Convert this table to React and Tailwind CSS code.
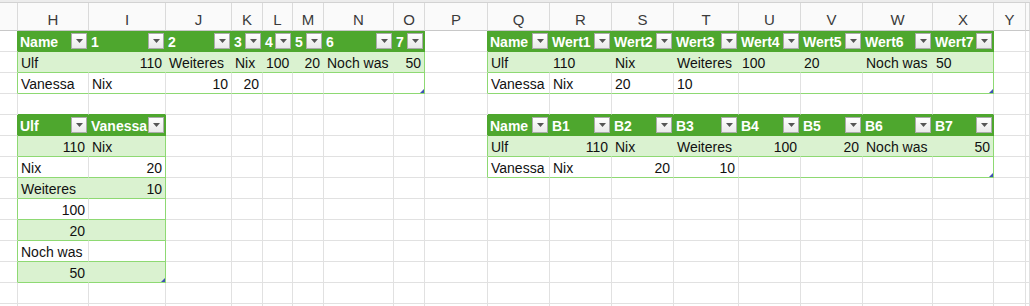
// App.jsx — Excel sheet with four formatted tables

const COLS = [
  ['G', 18], ['H', 71], ['I', 77], ['J', 66], ['K', 31], ['L', 30], ['M', 31], ['N', 70], ['O', 31],
  ['P', 63], ['Q', 62], ['R', 62], ['S', 62], ['T', 65], ['U', 62], ['V', 62], ['W', 70], ['X', 61],
  ['Y', 32], ['Z', 0],
];

const ROWS = 14;

const TABLES = [
  {
    c0: 1, c1: 8, r0: 1,
    head: ['Name', '1', '2', '3', '4', '5', '6', '7'],
    rows: [
      [['Ulf'], ['110', 'r'], ['Weiteres'], ['Nix'], ['100', 'r'], ['20', 'r'], ['Noch was'], ['50', 'r']],
      [['Vanessa'], ['Nix'], ['10', 'r'], ['20', 'r']],
    ],
  },
  {
    c0: 10, c1: 17, r0: 1,
    head: ['Name', 'Wert1', 'Wert2', 'Wert3', 'Wert4', 'Wert5', 'Wert6', 'Wert7'],
    rows: [
      [['Ulf'], ['110'], ['Nix'], ['Weiteres'], ['100'], ['20'], ['Noch was'], ['50']],
      [['Vanessa'], ['Nix'], ['20'], ['10']],
    ],
  },
  {
    c0: 1, c1: 2, r0: 5,
    head: ['Ulf', 'Vanessa'],
    rows: [
      [['110', 'r'], ['Nix']],
      [['Nix'], ['20', 'r']],
      [['Weiteres'], ['10', 'r']],
      [['100', 'r']],
      [['20', 'r']],
      [['Noch was']],
      [['50', 'r']],
    ],
  },
  {
    c0: 10, c1: 17, r0: 5,
    head: ['Name', 'B1', 'B2', 'B3', 'B4', 'B5', 'B6', 'B7'],
    rows: [
      [['Ulf'], ['110', 'r'], ['Nix'], ['Weiteres'], ['100', 'r'], ['20', 'r'], ['Noch was'], ['50', 'r']],
      [['Vanessa'], ['Nix'], ['20', 'r'], ['10', 'r']],
    ],
  },
];

const lastRow = (t) => t.r0 + t.rows.length;

const BG = { head: 'bg-[#4ea72e]', band: 'bg-[#daf2d0]', plain: 'bg-white', none: 'bg-white' };
const RIGHT = {
  head: 'border-r-[#4ea72e]',
  band: 'border-r-[#daf2d0]',
  edge: 'border-r-[#8ed973]',
  grid: 'border-r-[#e1e1e1]',
};
const BOTTOM = {
  head: 'border-b-[#4ea72e]',
  edge: 'border-b-[#8ed973]',
  grid: 'border-b-[#e1e1e1]',
};

function lookup(r, c) {
  for (const t of TABLES) {
    if (c >= t.c0 && c <= t.c1 && r >= t.r0 && r <= lastRow(t)) {
      const i = r - t.r0;
      const j = c - t.c0;
      if (i === 0) return { t, kind: 'head', cell: [t.head[j]], j };
      const kind = (i - 1) % 2 === 0 ? 'band' : 'plain';
      return { t, kind, cell: t.rows[i - 1][j], j };
    }
  }
  return null;
}

function FilterButton() {
  return (
    <span className="ml-auto mr-[1px] mt-[2px] flex h-4 w-4 flex-none items-center justify-center border border-[#ababab] bg-gradient-to-b from-white to-[#e9e9e9]">
      <svg width="7" height="4" viewBox="0 0 7 4">
        <polygon points="0,0 7,0 3.5,4" fill="#555" />
      </svg>
    </span>
  );
}

function Cell({ r, c }) {
  const info = lookup(r, c);
  let right = 'grid';
  let bottom = 'grid';

  if (info) {
    if (info.kind === 'head') right = 'head';
    else if (c === info.t.c1) right = 'edge';
    else right = info.kind === 'band' ? 'band' : 'grid';
    bottom = info.kind === 'head' ? 'head' : 'edge';
  } else {
    const leftOf = TABLES.find((t) => c === t.c0 - 1 && r >= t.r0 && r <= lastRow(t));
    if (leftOf) right = r === leftOf.r0 ? 'head' : 'edge';
    const above = TABLES.find((t) => r === t.r0 - 1 && c >= t.c0 && c <= t.c1);
    if (above) bottom = 'head';
  }

  const kind = info ? info.kind : 'none';
  const cell = info && info.cell;
  const text = cell ? cell[0] : null;
  const alignRight = cell && cell[1] === 'r';
  const isLastCell = info && c === info.t.c1 && r === lastRow(info.t);

  return (
    <div
      className={`relative flex h-[21px] min-w-0 overflow-visible border-r border-b ${BG[kind]} ${RIGHT[right]} ${BOTTOM[bottom]}`}
    >
      {kind === 'head' ? (
        <>
          <span className="whitespace-nowrap pl-[2px] text-[14px] leading-[22px] font-bold text-white">{text}</span>
          <FilterButton />
        </>
      ) : text ? (
        <span
          className={`w-full whitespace-nowrap px-[3px] text-[14px] leading-[22px] text-[#111] ${alignRight ? 'text-right' : 'text-left'}`}
        >
          {text}
        </span>
      ) : null}
      {isLastCell && (
        <svg className="absolute right-0 bottom-0" width="4" height="4" viewBox="0 0 4 4">
          <polygon points="4,0 4,4 0,4" fill="#3f51b5" />
        </svg>
      )}
    </div>
  );
}

export default function App() {
  return (
    <div className="h-[306px] w-[1030px] overflow-hidden bg-white font-['Liberation_Sans',sans-serif]">
      <div className="h-[3px] border-b border-[#d2d2d2] bg-[#ececec]" />
      <div className="grid grid-cols-[18px_71px_77px_66px_31px_30px_31px_70px_31px_63px_62px_62px_62px_65px_62px_62px_70px_61px_32px_1fr]">
        {COLS.map(([k]) => (
          <div
            key={k}
            className="flex h-[28px] items-end justify-center border-r border-b border-r-[#dadada] border-b-[#c8c8c8] bg-[#fafafa] pb-[2px] text-[15px] leading-[17px] text-[#3b3b3b]"
          >
            {k === 'G' || k === 'Z' ? '' : k}
          </div>
        ))}
        {Array.from({ length: ROWS }, (_, i) =>
          COLS.map((_, c) => <Cell key={`${i + 1}-${c}`} r={i + 1} c={c} />)
        )}
      </div>
    </div>
  );
}
